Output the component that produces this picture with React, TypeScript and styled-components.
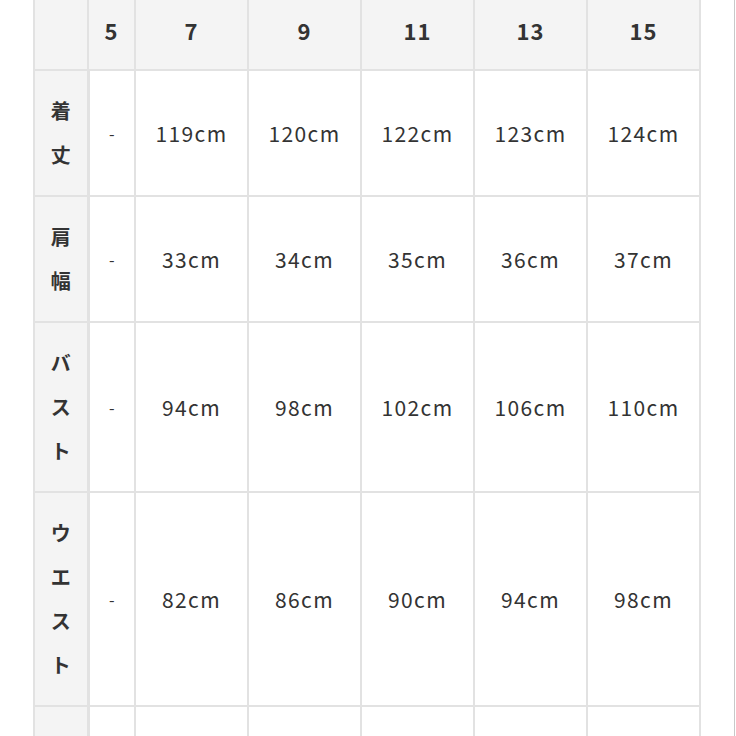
import styled, { createGlobalStyle } from 'styled-components';

const GlobalStyle = createGlobalStyle`
  html, body {
    margin: 0;
    padding: 0;
    background: #ffffff;
    overflow: hidden;
  }
  body {
    font-family: "Noto Sans CJK JP", "Noto Sans", sans-serif;
    color: #333333;
  }
`;

const sizes = ['5', '7', '9', '11', '13', '15'];
const colWidths = [54, 47, 113, 113, 113, 113, 113];

const rows = [
  { label: '着丈', values: ['-', '119cm', '120cm', '122cm', '123cm', '124cm'] },
  { label: '肩幅', values: ['-', '33cm', '34cm', '35cm', '36cm', '37cm'] },
  { label: 'バスト', values: ['-', '94cm', '98cm', '102cm', '106cm', '110cm'] },
  { label: 'ウエスト', values: ['-', '82cm', '86cm', '90cm', '94cm', '98cm'] },
  { label: '　', values: ['', '', '', '', '', ''] },
];

const App = () => {
  return (
    <Page>
      <GlobalStyle />
      <SizeTable>
        <colgroup>
          {colWidths.map((w, i) => (
            <Col key={i} $w={w} />
          ))}
        </colgroup>
        <thead>
          <tr>
            <HeadCell />
            {sizes.map((s) => (
              <HeadCell key={s}>{s}</HeadCell>
            ))}
          </tr>
        </thead>
        <tbody>
          {rows.map((row, i) => (
            <tr key={i}>
              <LabelCell>
                {row.label.split('').map((ch, j) => (
                  <LabelChar key={j}>{ch}</LabelChar>
                ))}
              </LabelCell>
              {row.values.map((v, j) => (
                <ValueCell key={j} $dash={v === '-'}>
                  {v}
                </ValueCell>
              ))}
            </tr>
          ))}
        </tbody>
      </SizeTable>
    </Page>
  );
};

const Page = styled.div`
  width: 735px;
  height: 736px;
  border-right: 1px solid #c8c8c8;
  padding-left: 33px;
  box-sizing: border-box;
  overflow: hidden;
`;

const SizeTable = styled.table`
  width: 666px;
  border-collapse: collapse;
  table-layout: fixed;
  border-left: 2px solid #e2e2e2;
`;

const Col = styled.col<{ $w: number }>`
  width: ${({ $w }) => $w}px;
`;

const HeadCell = styled.th`
  height: 70px;
  padding: 0 0 10px;
  box-sizing: border-box;
  background: #f4f4f4;
  border: 2px solid #e2e2e2;
  border-top: none;
  font-size: 22px;
  font-weight: 700;
  letter-spacing: 1px;
  color: #333333;
  text-align: center;
  vertical-align: middle;
`;

const LabelCell = styled.th`
  background: #f4f4f4;
  border: 2px solid #e2e2e2;
  border-right-width: 3px;
  padding: 18px 0;
  text-align: center;
  vertical-align: middle;
`;

const LabelChar = styled.span`
  display: block;
  height: 44px;
  line-height: 44px;
  font-size: 20px;
  font-weight: 700;
  color: #333333;
`;

const ValueCell = styled.td<{ $dash: boolean }>`
  border: 2px solid #e2e2e2;
  text-align: center;
  vertical-align: middle;
  font-size: ${({ $dash }) => ($dash ? '16px' : '21px')};
  letter-spacing: ${({ $dash }) => ($dash ? '0' : '1.4px')};
  color: #333333;
  background: #ffffff;
`;

export default App;
